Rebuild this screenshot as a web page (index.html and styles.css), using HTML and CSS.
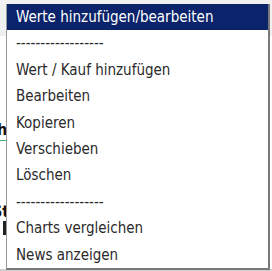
FILE: index.html
```html
<!DOCTYPE html>
<html>
<head>
<meta charset="utf-8">
<link rel="stylesheet" href="styles.css">
</head>
<body>
<div class="page">
  <div class="bg-top"></div>
  <div class="bg-row">
    <span class="bg-h">h</span>
  </div>
  <div class="bg-green"></div>
  <div class="bg-row2"><span class="bg-st">St</span></div>
  <div class="bg-bar"></div>
  <div class="bg-bottom"></div>
  <div class="bracket"></div>

  <ul class="menu">
    <li class="item selected">Werte hinzufügen/bearbeiten</li>
    <li class="item">------------------</li>
    <li class="item">Wert / Kauf hinzufügen</li>
    <li class="item">Bearbeiten</li>
    <li class="item">Kopieren</li>
    <li class="item">Verschieben</li>
    <li class="item">Löschen</li>
    <li class="item">------------------</li>
    <li class="item">Charts vergleichen</li>
    <li class="item">News anzeigen</li>
  </ul>
</div>
</body>
</html>
```

FILE: styles.css
```css
html, body {
  margin: 0;
  padding: 0;
  background: #ffffff;
}
.page {
  position: relative;
  width: 272px;
  height: 271px;
  overflow: hidden;
  font-family: "DejaVu Sans Condensed", "DejaVu Sans", sans-serif;
}
.bg-top {
  height: 36px;
  background: #f0f0f0;
}
.bg-row {
  height: 104px;
  display: flex;
  align-items: flex-end;
}
.bg-h {
  font-weight: bold;
  font-size: 16px;
  color: #111;
  margin-left: -3px;
  line-height: 20px;
}
.bg-green {
  height: 1px;
  background: #3cb371;
  width: 10px;
}
.bg-row2 {
  height: 80px;
  display: flex;
  align-items: flex-end;
}
.bg-st {
  font-weight: bold;
  font-size: 16px;
  color: #111;
  margin-left: -8px;
}
.bg-bar {
  width: 6px;
  height: 14px;
  margin-left: 3px;
  background: #222;
}
.bg-bottom {
  position: absolute;
  left: 0;
  right: 0;
  bottom: 0;
  height: 2px;
  background: #cfcfcf;
}
.bracket {
  position: absolute;
  left: 268px;
  top: 126px;
  width: 2px;
  height: 14px;
  background: #5a7ca8;
  border-top: 1px solid #222;
  border-bottom: 1px solid #222;
}
.menu {
  position: absolute;
  left: 6px;
  top: 4px;
  width: 261px;
  margin: 0;
  padding: 0;
  list-style: none;
  background: #ffffff;
  border-left: 1px solid #9a9a9a;
  border-right: 2px solid #7a7a7a;
  border-bottom: 2px solid #7a7a7a;
}
.item {
  height: 26.4px;
  line-height: 26.4px;
  padding-left: 9px;
  font-size: 15px;
  color: #2a2a2a;
  white-space: nowrap;
}
.item.selected {
  background: #0a236a;
  color: #ffffff;
}
```
